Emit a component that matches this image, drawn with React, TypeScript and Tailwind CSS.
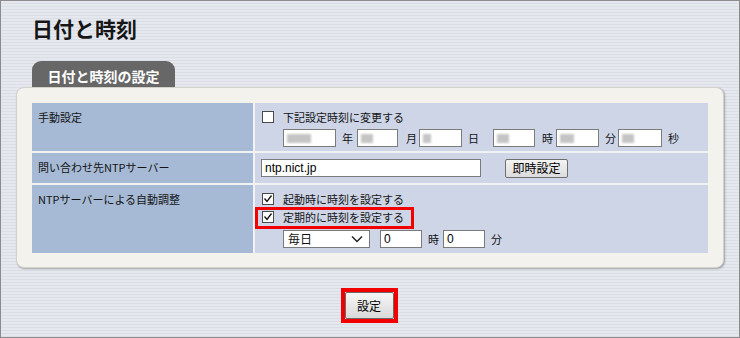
import React from 'react';

function CheckBox({ checked = false }: { checked?: boolean }) {
  return (
    <span className="w-[12px] h-[12px] border border-[#4a4a4a] bg-white flex items-center justify-center shrink-0">
      {checked && (
        <svg width="10" height="10" viewBox="0 0 10 10">
          <polyline points="1.5,4.5 4,7.5 8.5,1.5" fill="none" stroke="#111" strokeWidth="1.3" />
        </svg>
      )}
    </span>
  );
}

// blurred-out value box (year / month / etc.)
function BlurInput({ w, blob }: { w: string; blob: string }) {
  return (
    <span className={`${w} h-[18px] border border-[#7b7b7b] bg-white flex items-center pl-[3px] shrink-0`}>
      <span className={`${blob} h-[9px] bg-[#c4c4c4] blur-[1px]`} />
    </span>
  );
}

function TextBox({ w, value }: { w: string; value: string }) {
  return (
    <span className={`${w} h-[18px] border border-[#7b7b7b] bg-white flex items-center pl-[3px] shrink-0 font-['Liberation_Sans',sans-serif] text-[12px] text-black`}>
      {value}
    </span>
  );
}

export default function App() {
  return (
    <div className="w-[740px] h-[338px] overflow-hidden border border-[#8c8c8c] flex flex-col bg-[#e2e5eb] bg-[repeating-linear-gradient(180deg,#e5e8ee_0px,#e5e8ee_2px,#dadde4_2px,#dadde4_3px)] font-['Noto_Sans_CJK_JP',sans-serif] text-[11px] leading-[16px] text-[#141414]">
      {/* Page title */}
      <h1 className="ml-[31px] mt-[15px] h-[24px] text-[21px] leading-[24px] font-bold text-[#161616]">日付と時刻</h1>

      {/* Tab */}
      <div className="ml-[31px] mt-[21px] w-[143px] h-[26px] rounded-t-[9px] bg-[#676767] flex items-center justify-center pt-[3px] text-[14px] font-bold text-white">
        日付と時刻の設定
      </div>

      {/* Panel */}
      <div className="ml-[15px] w-[708px] rounded-[8px] border border-[#d2d1ca] bg-[#f3f2ec] px-[15px] pt-[15px] pb-[14px] shadow-[1px_1px_2px_rgba(0,0,0,0.3)]">
        <div className="grid grid-cols-[221px_1fr] grid-rows-[48px_30px_68px] gap-[2px] bg-[#f1f2f4]">
          {/* Row 1 */}
          <div className="bg-[#a6bad6] pl-[6px] pt-[6px]">手動設定</div>
          <div className="bg-[#cdd5e7] pl-[7px] pt-[5px]">
            <div className="h-[18px] flex items-center gap-[9px]">
              <CheckBox />
              <span>下記設定時刻に変更する</span>
            </div>
            <div className="mt-[3px] pl-[21px] flex items-center h-[18px]">
              <BlurInput w="w-[53px]" blob="w-[24px]" />
              <span className="ml-[6px] mr-[4px]">年</span>
              <BlurInput w="w-[41px]" blob="w-[12px]" />
              <span className="ml-[8px] mr-[2px]">月</span>
              <BlurInput w="w-[43px]" blob="w-[8px]" />
              <span className="ml-[6px] mr-[14px]">日</span>
              <BlurInput w="w-[42px]" blob="w-[12px]" />
              <span className="ml-[7px] mr-[3px]">時</span>
              <BlurInput w="w-[43px]" blob="w-[14px]" />
              <span className="ml-[6px] mr-[2px]">分</span>
              <BlurInput w="w-[44px]" blob="w-[12px]" />
              <span className="ml-[6px]">秒</span>
            </div>
          </div>

          {/* Row 2 */}
          <div className="bg-[#a6bad6] pl-[6px] pt-[6px]">問い合わせ先NTPサーバー</div>
          <div className="bg-[#cdd5e7] pl-[6px] flex items-center">
            <TextBox w="w-[220px]" value="ntp.nict.jp" />
            <button className="ml-[24px] w-[63px] h-[19px] border border-[#6f6f6f] rounded-[2px] bg-[linear-gradient(#f4f4f4,#dcdcdc)] text-[12px] leading-[16px] text-black">
              即時設定
            </button>
          </div>

          {/* Row 3 */}
          <div className="bg-[#a6bad6] pl-[6px] pt-[6px]">NTPサーバーによる自動調整</div>
          <div className="bg-[#cdd5e7] pl-[7px] pt-[5px]">
            <div className="h-[18px] flex items-center gap-[9px]">
              <CheckBox checked />
              <span>起動時に時刻を設定する</span>
            </div>
            <div className="relative h-[18px] flex items-center gap-[9px]">
              <CheckBox checked />
              <span>定期的に時刻を設定する</span>
              {/* highlight annotation */}
              <span className="absolute left-[-7px] top-[-1px] w-[159px] h-[22px] border-[3px] border-[#f20000]" />
            </div>
            <div className="mt-[4px] pl-[21px] h-[18px] flex items-center">
              <span className="w-[87px] h-[18px] border border-[#7b7b7b] bg-white flex items-center justify-between pl-[4px] pr-[6px] text-[12px]">
                毎日
                <svg width="12" height="8" viewBox="0 0 12 8">
                  <polyline points="1,1.5 6,6.5 11,1.5" fill="none" stroke="#222" strokeWidth="1.5" />
                </svg>
              </span>
              <span className="ml-[10px]">
                <TextBox w="w-[42px]" value="0" />
              </span>
              <span className="ml-[6px] mr-[4px]">時</span>
              <TextBox w="w-[42px]" value="0" />
              <span className="ml-[6px]">分</span>
            </div>
          </div>
        </div>
      </div>

      {/* Submit */}
      <div className="self-center mt-[20px] ml-[-2px] border-[4px] border-[#f20000]">
        <button className="w-[49px] h-[27px] border border-[#6a6a6a] rounded-[2px] bg-[linear-gradient(#f6f6f6,#d9d9d9)] text-[12px] text-black">
          設定
        </button>
      </div>
    </div>
  );
}
